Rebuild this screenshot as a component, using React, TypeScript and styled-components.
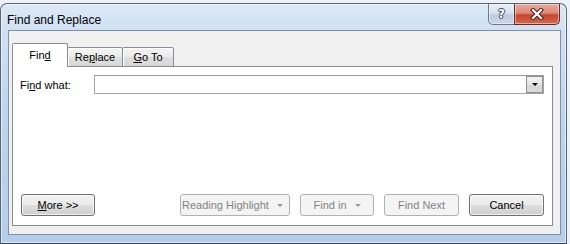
import React from 'react';
import styled, { createGlobalStyle } from 'styled-components';

const Global = createGlobalStyle`
  html, body { margin: 0; padding: 0; background: #eef2f6; }
  body {
    width: 570px; height: 244px; overflow: hidden;
    font-family: "Liberation Sans", Arial, sans-serif;
    font-size: 11px; color: #111;
  }
  * { box-sizing: border-box; }
`;

const Window = styled.div`
  margin-top: 3px;
  width: 567px;
  height: 241px;
  border: 1px solid #56667a;
  border-bottom-color: #3b4654;
  border-radius: 7px 7px 0 0;
  background: linear-gradient(180deg, #dbe8f6 0%, #cfe0f3 12%, #bfd5ee 45%, #b4cdea 100%);
  box-shadow: inset 0 0 0 1px rgba(255, 255, 255, 0.55);
  display: flex;
  flex-direction: column;
  padding-bottom: 8px;
`;

const TitleBar = styled.div`
  height: 26px;
  display: flex;
  justify-content: space-between;
  align-items: flex-start;
  padding: 0 6px 0 6px;
  flex: none;
`;

const TitleText = styled.div`
  font-size: 12px;
  line-height: 16px;
  padding-top: 8px;
  color: #000;
`;

const CaptionGroup = styled.div`
  display: flex;
  height: 21px;
  margin-top: 0;
`;

const CaptionButton = styled.div<{ $close?: boolean }>`
  width: ${p => (p.$close ? 46 : 27)}px;
  height: 21px;
  display: flex;
  align-items: center;
  justify-content: center;
  border: 1px solid ${p => (p.$close ? '#6b2a20' : '#6a7a8e')};
  border-top: none;
  border-radius: ${p => (p.$close ? '0 0 5px 0' : '0 0 0 5px')};
  margin-left: ${p => (p.$close ? '-1px' : '0')};
  background: ${p =>
    p.$close
      ? 'linear-gradient(180deg, #e9a99b 0%, #dc8a77 45%, #c8452f 55%, #d26a4e 100%)'
      : 'linear-gradient(180deg, #e8eff7 0%, #d6e1ee 45%, #bdcddf 55%, #c9d8e8 100%)'};
  box-shadow: inset 0 0 0 1px rgba(255, 255, 255, 0.45);
`;

const HelpGlyph = styled.span`
  font-family: "DejaVu Sans", sans-serif;
  font-weight: bold;
  font-size: 12px;
  line-height: 12px;
  color: #fff;
  text-shadow: 1px 0 0 #3d4a5c, -1px 0 0 #3d4a5c, 0 1px 0 #3d4a5c, 0 -1px 0 #3d4a5c;
`;

const Client = styled.div`
  flex: 1;
  margin: 0 5px 0 7px;
  background: #f0f0f0;
  border: 1px solid #7d91aa;
  padding: 12px 7px 8px 3px;
  display: flex;
  flex-direction: column;
`;

const TabStrip = styled.div`
  display: flex;
  align-items: flex-end;
  height: 24px;
  margin-bottom: -1px;
  position: relative;
  z-index: 1;
`;

const Tab = styled.div<{ $active?: boolean; $w: number }>`
  width: ${p => p.$w}px;
  height: ${p => (p.$active ? 24 : 20)}px;
  margin-left: ${p => (p.$active ? 0 : -1)}px;
  border: 1px solid #898c95;
  border-bottom: ${p => (p.$active ? 'none' : '1px solid #898c95')};
  border-radius: 2px 2px 0 0;
  background: ${p => (p.$active ? '#fff' : 'linear-gradient(180deg, #f4f4f4 0%, #ebebeb 50%, #dedede 51%, #d8d8d8 100%)')};
  box-shadow: ${p => (p.$active ? 'none' : 'inset 1px 1px 0 #fff')};
  display: flex;
  align-items: center;
  justify-content: center;
  padding-bottom: ${p => (p.$active ? 1 : 0)}px;
  color: #000;
`;

const U = styled.span`
  text-decoration: underline;
  text-underline-offset: 1px;
`;

const Panel = styled.div`
  flex: 1;
  background: #fff;
  border: 1px solid #898c95;
  padding: 8px 8px 9px 8px;
  display: flex;
  flex-direction: column;
  justify-content: space-between;
`;

const FieldRow = styled.div`
  display: flex;
  align-items: center;
  height: 19px;
`;

const Label = styled.label`
  width: 74px;
  color: #000;
  margin-left: -1px;
  padding-top: 1px;
`;

const ComboBox = styled.div`
  flex: 1;
  height: 19px;
  border: 1px solid #a5a5a5;
  border-top-color: #999;
  display: flex;
  justify-content: flex-end;
  background: #fff;
`;

const ComboArrow = styled.div`
  width: 17px;
  height: 17px;
  border: 1px solid #8e8f8f;
  background: linear-gradient(180deg, #f3f3f3 0%, #e6e6e6 50%, #d6d6d6 51%, #dcdcdc 100%);
  display: flex;
  align-items: center;
  justify-content: center;
`;

const Triangle = styled.span<{ $color: string; $w: number }>`
  width: 0;
  height: 0;
  border-left: ${p => p.$w}px solid transparent;
  border-right: ${p => p.$w}px solid transparent;
  border-top: ${p => p.$w}px solid ${p => p.$color};
`;

const ButtonRow = styled.div`
  display: flex;
  align-items: center;
  gap: 10px;
  height: 22px;
`;

const Spacer = styled.div`
  flex: 1;
`;

const Button = styled.div<{ $w: number; $disabled?: boolean; $left?: boolean }>`
  width: ${p => p.$w}px;
  height: 22px;
  border: 1px solid ${p => (p.$disabled ? '#adb2b5' : '#707070')};
  border-radius: 3px;
  background: ${p =>
    p.$disabled
      ? '#f4f4f4'
      : 'linear-gradient(180deg, #f2f2f2 0%, #ebebeb 50%, #dddddd 51%, #cfcfcf 100%)'};
  box-shadow: ${p => (p.$disabled ? 'none' : 'inset 0 0 0 1px rgba(255,255,255,0.7)')};
  color: ${p => (p.$disabled ? '#838383' : '#000')};
  display: flex;
  align-items: center;
  justify-content: ${p => (p.$left ? 'space-between' : 'center')};
  padding: ${p => (p.$left ? '0 6px 0 1px' : '0 2px')};
  gap: 8px;
  white-space: nowrap;
`;

const CloseIcon = () => (
  <svg width="14" height="12" viewBox="0 0 14 12">
    <path d="M3 2 L11 10 M11 2 L3 10" stroke="#4a1f18" strokeWidth="4.2" strokeLinecap="square" />
    <path d="M3 2 L11 10 M11 2 L3 10" stroke="#fff" strokeWidth="2.2" strokeLinecap="square" />
  </svg>
);

export default function App() {
  return (
    <>
      <Global />
      <Window>
        <TitleBar>
          <TitleText>Find and Replace</TitleText>
          <CaptionGroup>
            <CaptionButton>
              <HelpGlyph>?</HelpGlyph>
            </CaptionButton>
            <CaptionButton $close>
              <CloseIcon />
            </CaptionButton>
          </CaptionGroup>
        </TitleBar>
        <Client>
          <TabStrip>
            <Tab $active $w={56}>
              Fin<U>d</U>
            </Tab>
            <Tab $w={56}>
              Re<U>p</U>lace
            </Tab>
            <Tab $w={52}>
              <U>G</U>o To
            </Tab>
          </TabStrip>
          <Panel>
            <FieldRow>
              <Label>
                Fi<U>n</U>d what:
              </Label>
              <ComboBox>
                <ComboArrow>
                  <Triangle $color="#000" $w={3.5} />
                </ComboArrow>
              </ComboBox>
            </FieldRow>
            <ButtonRow>
              <Button $w={74}>
                <span>
                  <U>M</U>ore &gt;&gt;
                </span>
              </Button>
              <Spacer />
              <Button $w={110} $disabled $left>
                <span>Reading Highlight</span>
                <Triangle $color="#9a9a9a" $w={3} />
              </Button>
              <Button $w={74} $disabled>
                <span>Find in</span>
                <Triangle $color="#9a9a9a" $w={3} />
              </Button>
              <Button $w={75} $disabled>
                <span>Find Next</span>
              </Button>
              <Button $w={75}>
                <span>Cancel</span>
              </Button>
            </ButtonRow>
          </Panel>
        </Client>
      </Window>
    </>
  );
}
